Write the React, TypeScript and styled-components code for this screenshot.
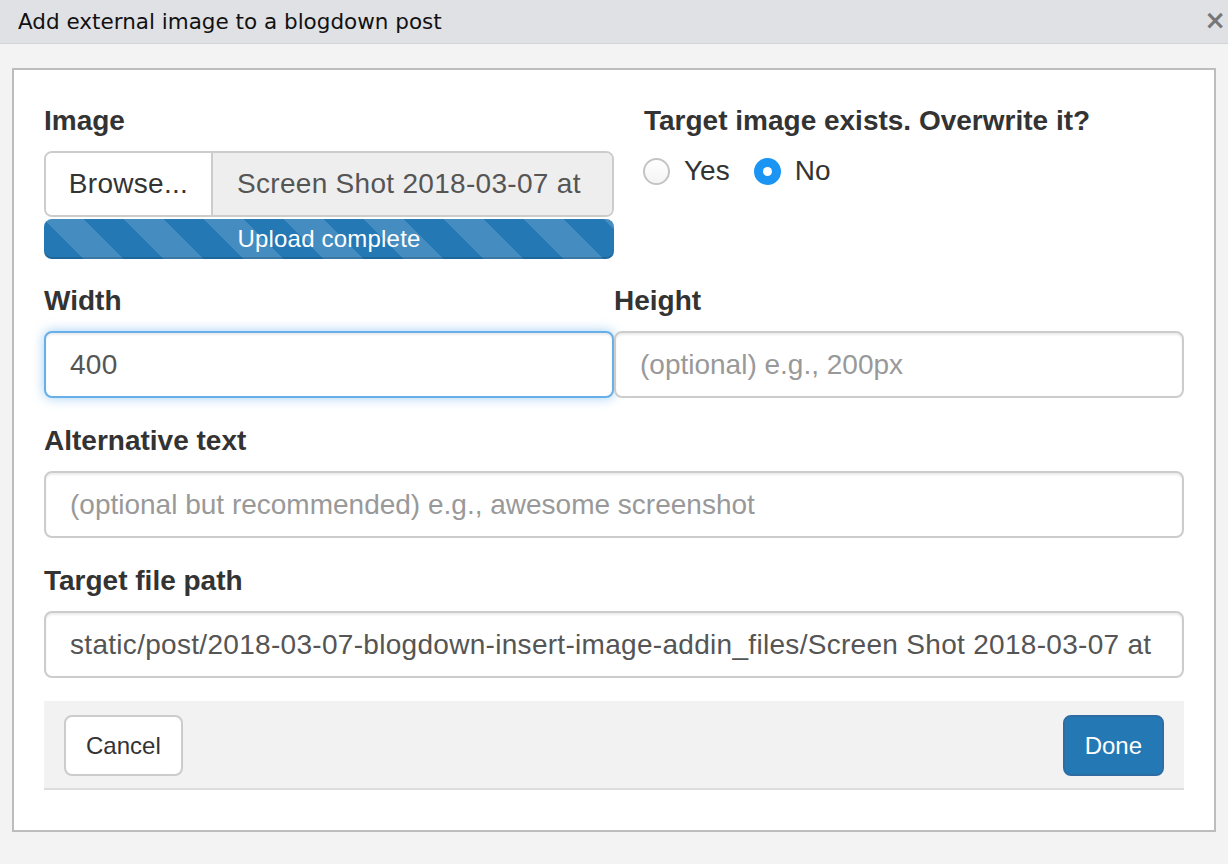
import React from "react";
import styled, { createGlobalStyle } from "styled-components";

const GlobalStyle = createGlobalStyle`
  html, body {
    margin: 0;
    padding: 0;
    background: #f2f3f2;
  }
  * {
    box-sizing: border-box;
  }
`;

const App: React.FC = () => {
  return (
    <Window>
      <GlobalStyle />
      <TitleBar>
        <Title>Add external image to a blogdown post</Title>
        <Close>×</Close>
      </TitleBar>
      <Body>
        <Panel>
          <Row gap={22}>
            <ImageCol>
              <Label>Image</Label>
              <InputGroup>
                <BrowseButton>Browse...</BrowseButton>
                <FileName>
                  <Clip>Screen Shot 2018-03-07 at 10.23.15 PM.png</Clip>
                </FileName>
              </InputGroup>
              <Progress>Upload complete</Progress>
            </ImageCol>
            <OverwriteCol>
              <Label>Target image exists. Overwrite it?</Label>
              <RadioRow>
                <RadioOption>
                  <Radio checked={false} />
                  <span>Yes</span>
                </RadioOption>
                <RadioOption>
                  <Radio checked />
                  <span>No</span>
                </RadioOption>
              </RadioRow>
            </OverwriteCol>
          </Row>

          <Row gap={23}>
            <Half>
              <Label>Width</Label>
              <TextInput focused>400</TextInput>
            </Half>
            <Half>
              <Label>Height</Label>
              <TextInput placeholder>(optional) e.g., 200px</TextInput>
            </Half>
          </Row>

          <Group>
            <Label>Alternative text</Label>
            <TextInput placeholder>
              (optional but recommended) e.g., awesome screenshot
            </TextInput>
          </Group>

          <Group>
            <Label>Target file path</Label>
            <TextInput>
              <Clip>
                static/post/2018-03-07-blogdown-insert-image-addin_files/Screen
                Shot 2018-03-07 at 10.23.15 PM.png
              </Clip>
            </TextInput>
          </Group>

          <Footer>
            <Button>Cancel</Button>
            <Button primary>Done</Button>
          </Footer>
        </Panel>
      </Body>
    </Window>
  );
};

export default App;

const Window = styled.div`
  width: 1228px;
  height: 864px;
  display: flex;
  flex-direction: column;
  background: #f2f3f2;
  font-family: "Liberation Sans", Arial, sans-serif;
  color: #333;
`;

const TitleBar = styled.div`
  height: 44px;
  flex-shrink: 0;
  display: flex;
  align-items: center;
  justify-content: space-between;
  padding: 0 2px 0 18px;
  background: #e0e1e5;
  border-bottom: 1px solid #d3d4d8;
`;

const Title = styled.div`
  font-family: "DejaVu Sans", sans-serif;
  font-size: 21.5px;
  color: #111;
`;

const Close = styled.div`
  font-family: "DejaVu Sans", sans-serif;
  font-size: 26px;
  font-weight: bold;
  color: #777;
  line-height: 1;
  margin-top: -4px;
`;

const Body = styled.div`
  padding: 24px 12px 0 12px;
`;

const Panel = styled.div`
  background: #fff;
  border: 2px solid #bdbdbd;
  padding: 31px 30px 40px 30px;
`;

const Row = styled.div<{ gap: number }>`
  display: flex;
  margin-bottom: ${({ gap }) => gap}px;
`;

const ImageCol = styled.div`
  width: 570px;
`;

const OverwriteCol = styled.div`
  padding-left: 30px;
`;

const Half = styled.div`
  width: 50%;
`;

const Group = styled.div`
  margin-bottom: 23px;
`;

const Label = styled.div`
  font-size: 28px;
  font-weight: bold;
  line-height: 40px;
  margin-bottom: 10px;
  color: #333;
`;

const InputGroup = styled.div`
  display: flex;
  height: 66px;
  border: 2px solid #ccc;
  border-radius: 8px;
  overflow: hidden;
  font-size: 28px;
  letter-spacing: 0.3px;
`;

const BrowseButton = styled.div`
  width: 167px;
  display: flex;
  align-items: center;
  justify-content: center;
  background: #fff;
  border-right: 2px solid #ccc;
  color: #333;
`;

const FileName = styled.div`
  flex: 1;
  display: flex;
  align-items: center;
  padding: 0 24px;
  background: #eee;
  color: #555;
  min-width: 0;
`;

const Clip = styled.span`
  display: block;
  white-space: nowrap;
  overflow: hidden;
  width: 100%;
`;

const Progress = styled.div`
  margin-top: 2px;
  height: 40px;
  border-radius: 8px;
  background-color: #2479b5;
  background-image: linear-gradient(
    45deg,
    rgba(255, 255, 255, 0.15) 25%,
    transparent 25%,
    transparent 50%,
    rgba(255, 255, 255, 0.15) 50%,
    rgba(255, 255, 255, 0.15) 75%,
    transparent 75%,
    transparent
  );
  background-size: 80px 80px;
  box-shadow: inset 0 -2px 0 rgba(0, 0, 0, 0.15);
  color: #fff;
  font-size: 24px;
  letter-spacing: 0.2px;
  line-height: 40px;
  text-align: center;
`;

const RadioRow = styled.div`
  display: flex;
  align-items: center;
  gap: 24px;
  margin-top: 1px;
  margin-left: -1px;
  height: 40px;
`;

const RadioOption = styled.div`
  display: flex;
  align-items: center;
  gap: 14px;
  font-size: 28px;
  color: #333;
`;

const Radio = styled.span<{ checked: boolean }>`
  width: 27px;
  height: 27px;
  flex-shrink: 0;
  border-radius: 50%;
  display: flex;
  align-items: center;
  justify-content: center;
  background: ${({ checked }) =>
    checked ? "#1b95f3" : "linear-gradient(#fff, #f4f4f4)"};
  border: ${({ checked }) => (checked ? "none" : "2px solid #c4c4c4")};
  &::after {
    content: "";
    display: ${({ checked }) => (checked ? "block" : "none")};
    width: 9px;
    height: 9px;
    border-radius: 50%;
    background: #fff;
  }
`;

const TextInput = styled.div<{ focused?: boolean; placeholder?: boolean }>`
  height: 67px;
  display: flex;
  align-items: center;
  padding: 0 24px;
  font-size: 28px;
  letter-spacing: ${({ placeholder }) => (placeholder ? "0" : "0.3px")};
  background: #fff;
  color: ${({ placeholder }) => (placeholder ? "#999" : "#555")};
  border: 2px solid ${({ focused }) => (focused ? "#66afe9" : "#ccc")};
  border-radius: 8px;
  box-shadow: ${({ focused }) =>
    focused
      ? "inset 0 2px 2px rgba(0,0,0,.075), 0 0 12px rgba(102,175,233,.6)"
      : "inset 0 2px 2px rgba(0,0,0,.075)"};
  white-space: nowrap;
  overflow: hidden;
`;

const Footer = styled.div`
  display: flex;
  justify-content: space-between;
  align-items: flex-start;
  height: 89px;
  padding: 14px 20px 0 20px;
  background: #f2f2f2;
  border-bottom: 2px solid #ddd;
`;

const Button = styled.div<{ primary?: boolean }>`
  height: 61px;
  display: flex;
  align-items: center;
  padding: 0 20px;
  font-size: 24px;
  border-radius: 8px;
  background: ${({ primary }) => (primary ? "#2479b5" : "#fff")};
  color: ${({ primary }) => (primary ? "#fff" : "#333")};
  border: 2px solid ${({ primary }) => (primary ? "#2e6da4" : "#ccc")};
`;
